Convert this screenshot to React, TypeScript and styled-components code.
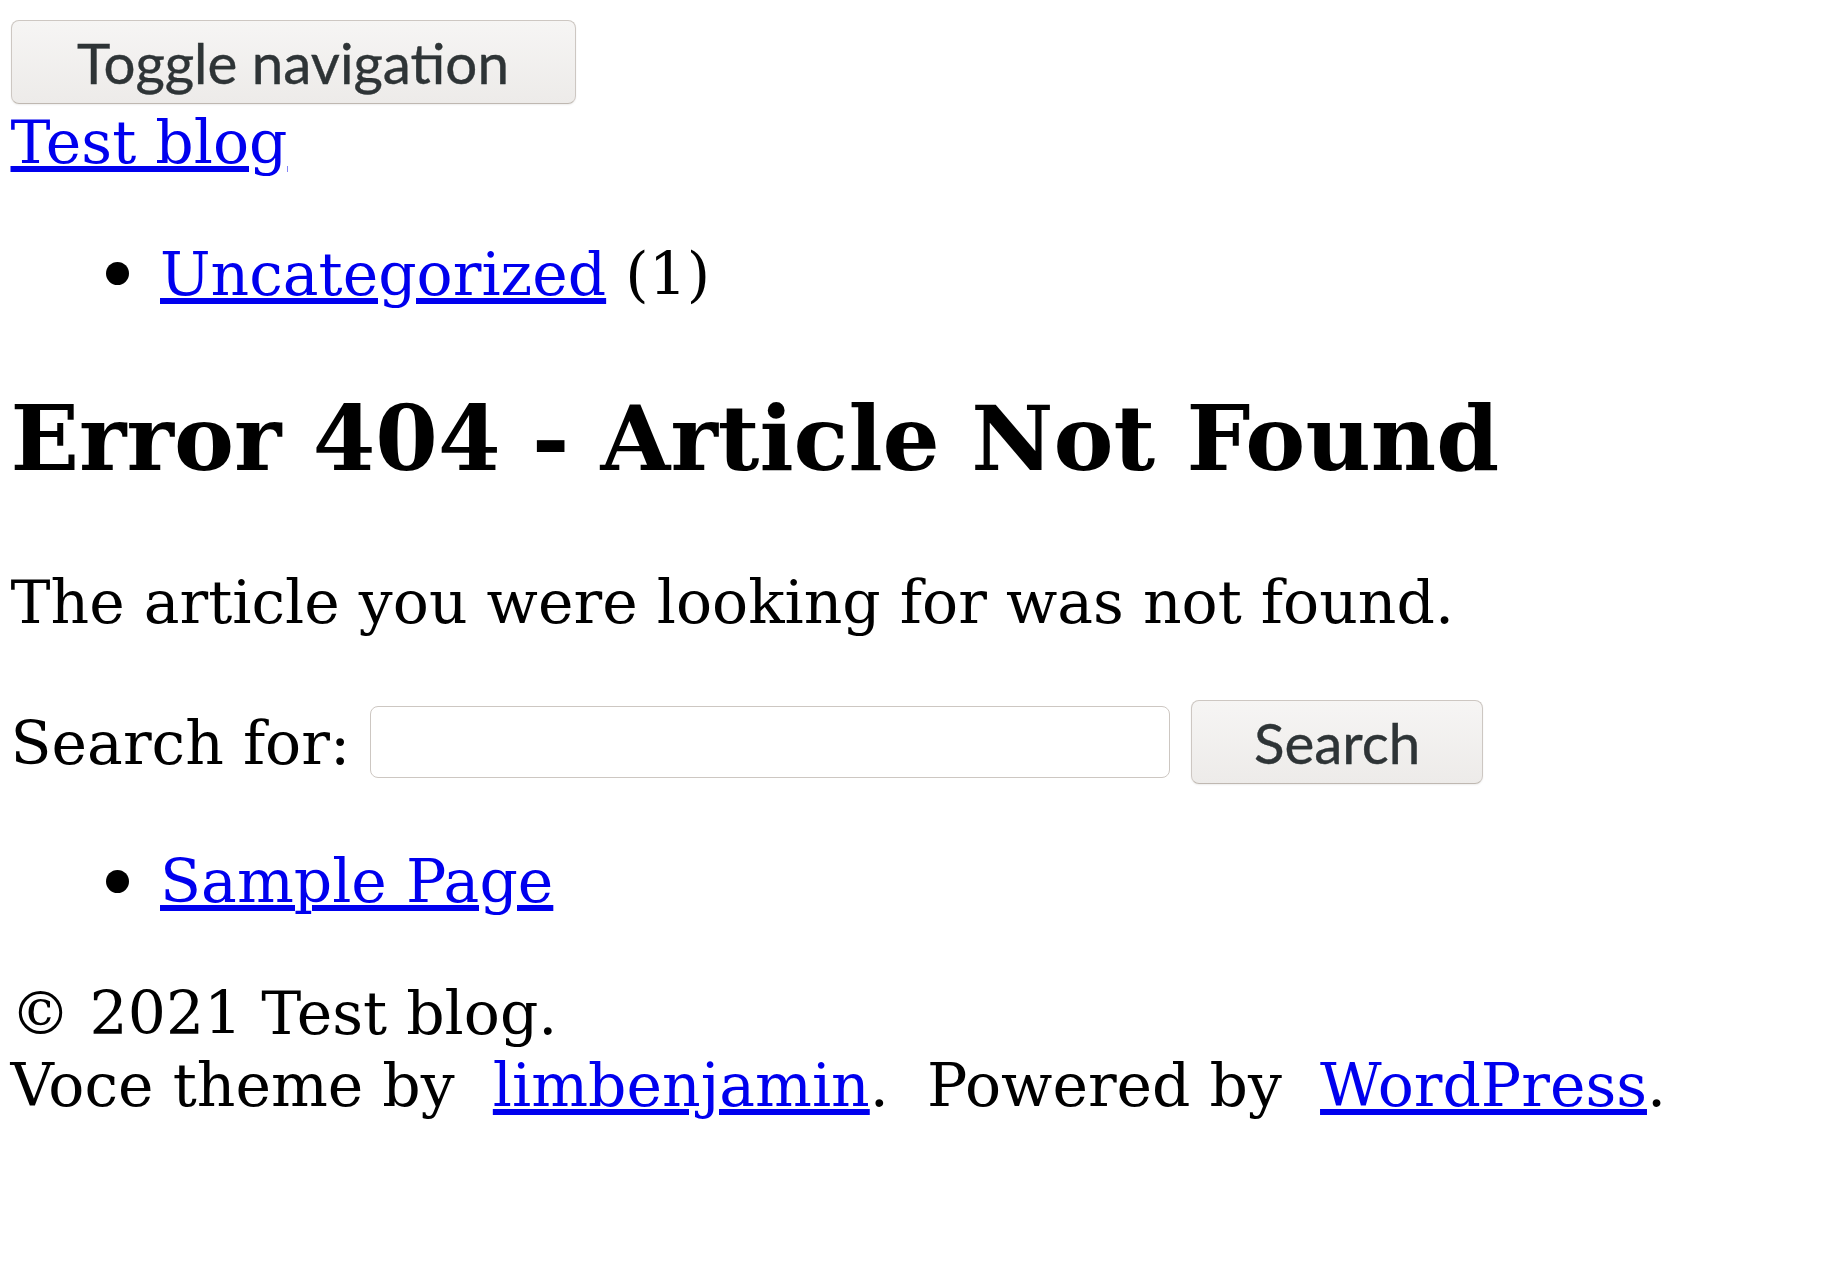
import React from "react";
import styled, { createGlobalStyle } from "styled-components";

const Global = createGlobalStyle`
  html, body { margin: 0; padding: 0; background: #ffffff; }
  body {
    font-family: "DejaVu Serif", serif;
    font-size: 60px;
    line-height: 72px;
    color: #000000;
  }
  a { color: #0000ee; }
`;

const Page = styled.div`
  padding: 20px 10.5px 0;
`;

const Header = styled.header`
  display: flex;
  flex-direction: column;
  align-items: flex-start;
`;

const GtkButton = styled.button<{ $w: number }>`
  box-sizing: border-box;
  width: ${(p) => p.$w}px;
  height: 84px;
  padding: 0;
  border: 1px solid #cdc7c2;
  border-bottom-color: #bfb8b1;
  border-radius: 8px;
  background: linear-gradient(to bottom, #f6f5f4, #edebe9);
  box-shadow: 0 1px 2px rgba(0, 0, 0, 0.07);
  color: #2e3436;
  font-family: Lato, "Open Sans", sans-serif;
  font-size: 56.5px;
  line-height: 1;
  -webkit-text-stroke: 0.4px #2e3436;
  flex-shrink: 0;
  cursor: pointer;
`;

const Brand = styled.a`
  display: block;
  margin-top: 2px;
`;

const List = styled.ul<{ $dot: number; $top: number }>`
  margin: ${(p) => p.$top}px 0 60px;
  padding-left: 149.5px;
  list-style: none;

  & > li::before {
    content: "";
    display: inline-block;
    width: 23px;
    height: 23px;
    border-radius: 50%;
    background: #000000;
    margin-left: -54px;
    margin-right: 31px;
    vertical-align: ${(p) => p.$dot}px;
  }
`;

const Count = styled.span`
  color: #000000;
`;

const Title = styled.h1`
  font-size: 90px;
  line-height: 108px;
  font-weight: bold;
  margin: 74px 0;
`;

const Text = styled.p`
  margin: 74px 0 62px;
`;

const SearchForm = styled.form`
  display: flex;
  align-items: center;
  height: 84px;
  margin: 0;
`;

const Label = styled.label`
  white-space: nowrap;
  padding-top: 2px;
`;

const Field = styled.input`
  box-sizing: border-box;
  width: 800px;
  height: 72px;
  margin: 0 0 0 20px;
  border: 1px solid #cdc7c2;
  border-radius: 8px;
  background: #ffffff;
  outline: none;
`;

const SearchButton = styled(GtkButton)`
  margin-left: 21px;
`;

const Footer = styled.footer`
  margin: 0;
`;

const Line = styled.div``;

export default function App() {
  return (
    <>
      <Global />
      <Page>
        <Header>
          <GtkButton $w={565} type="button">Toggle navigation</GtkButton>
          <Brand href="#">Test blog</Brand>
        </Header>
        <List $dot={10} $top={60}>
          <li>
            <a href="#">Uncategorized</a> <Count>(1)</Count>
          </li>
        </List>
        <Title>Error 404 - Article Not Found</Title>
        <Text>The article you were looking for was not found.</Text>
        <SearchForm onSubmit={(e) => e.preventDefault()}>
          <Label htmlFor="s">Search for:</Label>
          <Field id="s" type="text" />
          <SearchButton $w={292} type="submit">Search</SearchButton>
        </SearchForm>
        <List $dot={9} $top={61}>
          <li>
            <a href="#">Sample Page</a>
          </li>
        </List>
        <Footer>
          <Line>© 2021 Test blog.</Line>
          <Line>
            Voce theme by&nbsp; <a href="#">limbenjamin</a>.&nbsp; Powered by&nbsp; <a href="#">WordPress</a>.
          </Line>
        </Footer>
      </Page>
    </>
  );
}
